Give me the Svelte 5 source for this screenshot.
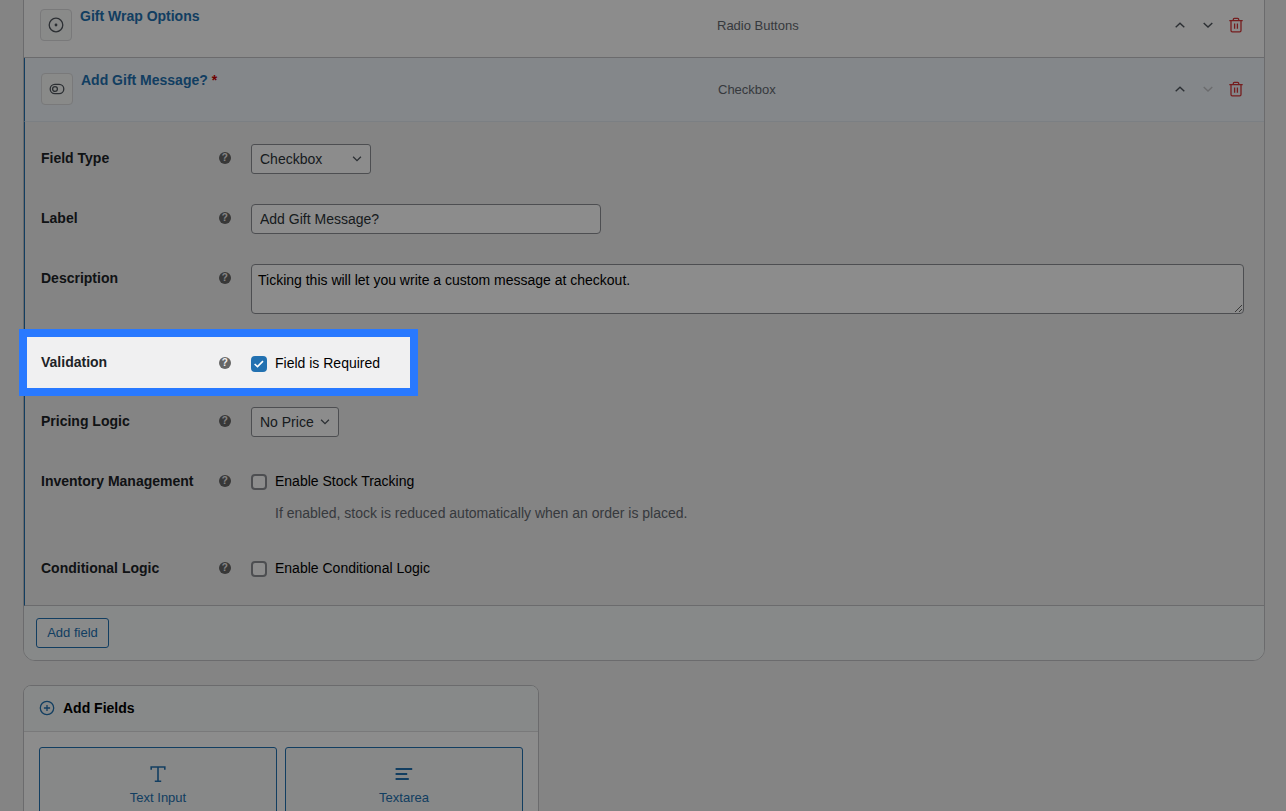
<script>
	let rows = [
		{ id: 'wrap', title: 'Gift Wrap Options', type: 'Radio Buttons', icon: 'radio', required: false, open: false, last: false },
		{ id: 'message', title: 'Add Gift Message?', type: 'Checkbox', icon: 'toggle', required: true, open: true, last: true }
	];

	let fieldLabel = $state('Add Gift Message?');
	let description = $state('Ticking this will let you write a custom message at checkout.');
	let fieldType = $state('Checkbox');
	let pricing = $state('No Price');
	let required = $state(true);
	let stock = $state(false);
	let conditional = $state(false);
</script>

{#snippet chevron(up)}
	<svg width="16" height="16" viewBox="0 0 16 16" fill="none" stroke="currentColor" stroke-width="1.4">
		<path d={up ? 'M3.7 10.3 8 6.2l4.3 4.1' : 'M3.7 5.9 8 10l4.3-4.1'} />
	</svg>
{/snippet}

{#snippet caption(text)}
	<div class="caption">{text}</div>
	<div class="help-cell"><span class="help">?</span></div>
{/snippet}

{#snippet check()}
	<svg class="tick" width="16" height="16" viewBox="0 0 16 16" fill="none" stroke="#fff" stroke-width="1.6">
		<path d="M3.6 8 6.5 10.6l5.5-5.5" />
	</svg>
{/snippet}

{#snippet arrow()}
	<span class="arrow">
		<svg width="10" height="6" viewBox="0 0 10 6" fill="none" stroke="currentColor" stroke-width="1.3"><path d="M1.1.8 5 4.7 8.9.8" /></svg>
	</span>
{/snippet}

<div class="page">
	<div class="panel">
		{#each rows as row (row.id)}
			<div class="field-head" class:open={row.open}>
				<div class="field-name">
					<span class="field-icon">
						{#if row.icon === 'radio'}
							<svg width="16" height="16" viewBox="0 0 16 16">
								<circle cx="8" cy="8" r="6.8" fill="none" stroke="currentColor" stroke-width="1.3" />
								<circle cx="8" cy="8" r="1.4" fill="currentColor" />
							</svg>
						{:else}
							<svg width="16" height="16" viewBox="0 0 16 16" fill="none" stroke="currentColor" stroke-width="1.3">
								<rect x="1.2" y="3.3" width="13.6" height="9.4" rx="4.7" />
								<circle cx="6" cy="8" r="2.4" />
							</svg>
						{/if}
					</span>
					<a href="#{row.id}" class="title">{row.title}{#if row.required}<span class="star">&nbsp;*</span>{/if}</a>
				</div>
				<div class="field-kind">{row.type}</div>
				<div class="actions">
					<button type="button" aria-label="Move up">{@render chevron(true)}</button>
					<button type="button" aria-label="Move down" class:muted={row.last}>{@render chevron(false)}</button>
					<button type="button" aria-label="Delete" class="delete">
						<svg width="16" height="16" viewBox="0 0 16 16" fill="none" stroke="currentColor" stroke-width="1.3">
							<path d="M1.3 3.6h13.4M5.3 3.6V2.4q0-1 1-1h3.4q1 0 1 1v1.2M3 3.6v10q0 1.3 1.3 1.3h7.4q1.3 0 1.3-1.3v-10M6.6 6.6v5.2M9.4 6.6v5.2" />
						</svg>
					</button>
				</div>
			</div>
		{/each}

		<div class="settings">
			<div class="setting">
				{@render caption('Field Type')}
				<div class="control">
					<div class="select type">
						<select bind:value={fieldType}><option>Checkbox</option></select>
						{@render arrow()}
					</div>
				</div>
			</div>
			<div class="setting">
				{@render caption('Label')}
				<div class="control"><input type="text" class="text" bind:value={fieldLabel} /></div>
			</div>
			<div class="setting tall">
				{@render caption('Description')}
				<div class="control"><textarea bind:value={description} spellcheck="false"></textarea></div>
			</div>
			<div class="setting validation">
				{@render caption('Validation')}
				<div class="control">
					<label class="option">
						<span class="box" class:checked={required}><input type="checkbox" bind:checked={required} />{#if required}{@render check()}{/if}</span>
						<span>Field is Required</span>
					</label>
				</div>
			</div>
			<div class="setting">
				{@render caption('Pricing Logic')}
				<div class="control">
					<div class="select price">
						<select bind:value={pricing}><option>No Price</option></select>
						{@render arrow()}
					</div>
				</div>
			</div>
			<div class="setting inventory">
				{@render caption('Inventory Management')}
				<div class="control">
					<label class="option">
						<span class="box" class:checked={stock}><input type="checkbox" bind:checked={stock} />{#if stock}{@render check()}{/if}</span>
						<span>Enable Stock Tracking</span>
					</label>
					<p class="note">If enabled, stock is reduced automatically when an order is placed.</p>
				</div>
			</div>
			<div class="setting">
				{@render caption('Conditional Logic')}
				<div class="control">
					<label class="option">
						<span class="box" class:checked={conditional}><input type="checkbox" bind:checked={conditional} />{#if conditional}{@render check()}{/if}</span>
						<span>Enable Conditional Logic</span>
					</label>
				</div>
			</div>
		</div>

		<div class="panel-foot">
			<button type="button" class="add">Add field</button>
		</div>
	</div>

	<div class="palette">
		<div class="palette-head">
			<svg width="16" height="16" viewBox="0 0 16 16" fill="none" stroke="#2271b1" stroke-width="1.3">
				<circle cx="8" cy="8" r="6.7" />
				<path d="M8 4.9v6.2M4.9 8h6.2" />
			</svg>
			<h2>Add Fields</h2>
		</div>
		<div class="palette-grid">
			<button type="button" class="tile">
				<svg width="18" height="18" viewBox="0 0 18 18" fill="none" stroke="currentColor" stroke-width="1.6">
					<path d="M2.2 4.8V2h13.6v2.8M9 2v14.2M5.8 16.2h6.4" />
				</svg>
				<span>Text Input</span>
			</button>
			<button type="button" class="tile">
				<svg width="18" height="18" viewBox="0 0 18 18" fill="none" stroke="currentColor" stroke-width="2">
					<path d="M.6 4h16.6M.6 9h11.6M.6 14h13.2" />
				</svg>
				<span>Textarea</span>
			</button>
		</div>
	</div>

	<!-- dims everything outside the highlighted row -->
	<div class="spotlight"></div>
</div>

<style>
	:global(body) {
		overflow: hidden;
		background: #f0f0f1;
	}

	.page {
		position: relative;
		height: 811px;
		overflow: hidden;
		box-sizing: border-box;
		padding: 0 21px 0 23px;
		background: #f0f0f1;
		font-family: 'Liberation Sans', Arial, sans-serif;
		font-size: 14px;
		line-height: 20px;
		color: #000;
	}

	.page * {
		box-sizing: border-box;
	}

	button,
	input,
	select,
	textarea {
		font-family: inherit;
		margin: 0;
	}

	svg {
		display: block;
	}

	.panel {
		margin-top: -7px;
		border: 1px solid #c3c4c7;
		border-radius: 0 0 12px 12px;
		overflow: hidden;
		background: #fff;
	}

	.field-head {
		display: flex;
		height: 64px;
		padding: 15px 14px 0 16px;
		border-bottom: 1px solid #c3c4c7;
	}

	.field-head.open {
		background: #f0f6fc;
		border-left: 1px solid #2271b1;
		border-bottom-color: #e0e8ee;
	}

	.field-name {
		display: flex;
		width: 677px;
		gap: 8px;
	}

	.field-icon {
		display: flex;
		width: 32px;
		height: 32px;
		align-items: center;
		justify-content: center;
		border: 1px solid #dcdcde;
		border-radius: 4px;
		background: #f9fbfa;
		color: #50575e;
	}

	.title {
		height: 20px;
		margin-top: -3px;
		font-weight: 700;
		color: #2271b1;
		text-decoration: none;
	}

	.star {
		color: #c00;
	}

	.field-kind {
		flex: 1;
		padding-top: 7px;
		font-size: 13px;
		color: #646970;
	}

	.actions {
		display: flex;
		height: 32px;
		align-items: center;
	}

	.actions button {
		display: flex;
		width: 28px;
		height: 28px;
		align-items: center;
		justify-content: center;
		padding: 0;
		border: none;
		background: none;
		color: #50575e;
	}

	.actions .muted {
		color: #c3c4c7;
	}

	.actions .delete {
		color: #d63638;
	}

	.settings {
		height: 484px;
		padding: 7px 20px 0 16px;
		background: #f0f0f1;
		border-left: 1px solid #2271b1;
		border-bottom: 1px solid #c3c4c7;
	}

	.setting {
		display: flex;
		height: 60px;
	}

	.setting.tall {
		height: 84px;
	}

	.setting.validation {
		height: 59px;
		padding-top: 1px;
	}

	.setting.validation .caption {
		padding-top: 18px;
	}

	.setting.inventory {
		height: 87px;
	}

	.caption {
		width: 177px;
		padding-top: 19px;
		font-weight: 700;
		color: #1d2327;
	}

	.help-cell {
		width: 33px;
		padding-top: 22.6px;
	}

	.help {
		display: block;
		width: 12px;
		height: 12px;
		margin-left: 0.8px;
		border-radius: 50%;
		background: #666;
		color: #f0f0f1;
		font-size: 10px;
		font-weight: 700;
		line-height: 12px;
		text-align: center;
	}

	.control {
		flex: 1;
		padding-top: 15px;
	}

	.select {
		position: relative;
		height: 30px;
	}

	.select.type {
		width: 120px;
	}

	.select.price {
		width: 88px;
	}

	select {
		width: 100%;
		height: 30px;
		padding: 0 24px 0 8px;
		appearance: none;
		border: 1px solid #8c8f94;
		border-radius: 3px;
		background: #fff;
		font-size: 14px;
		color: #2c3338;
	}

	.arrow {
		position: absolute;
		top: 12px;
		right: 9px;
		color: #50575e;
		pointer-events: none;
	}

	.text {
		display: block;
		width: 350px;
		height: 30px;
		padding: 0 8px;
		border: 1px solid #8c8f94;
		border-radius: 4px;
		background: #fff;
		font-size: 14px;
		color: #2c3338;
	}

	textarea {
		display: block;
		width: 993px;
		height: 50px;
		padding: 5px 6px;
		border: 1px solid #8c8f94;
		border-radius: 4px;
		background: #fff;
		font-size: 14px;
		line-height: 20px;
		color: #000;
	}

	.option {
		display: flex;
		gap: 8px;
		height: 20px;
		margin-top: 4px;
	}

	.box {
		position: relative;
		width: 16px;
		height: 16px;
		margin-top: 3px;
		border: 2px solid #8c8f94;
		border-radius: 4px;
		background: #fff;
	}

	.box.checked {
		border-color: #2271b1;
		background: #2271b1;
	}

	.box input {
		display: block;
		width: 100%;
		height: 100%;
		opacity: 0;
	}

	.tick {
		position: absolute;
		top: -2px;
		left: -2px;
	}

	.note {
		margin: 12px 0 0 24px;
		color: #646970;
	}

	.panel-foot {
		height: 54px;
		padding: 12px;
		background: #f6faf9;
	}

	.add {
		width: 73px;
		height: 30px;
		padding: 0 0 2px;
		border: 1px solid #2271b1;
		border-radius: 3px;
		background: #f9fbfb;
		font-size: 13px;
		color: #2271b1;
	}

	.palette {
		width: 516px;
		height: 300px;
		margin-top: 24px;
		border: 1px solid #c3c4c7;
		border-radius: 8px;
		overflow: hidden;
		background: #fff;
	}

	.palette-head {
		display: flex;
		height: 46px;
		align-items: center;
		gap: 8px;
		padding: 0 15px 1px;
		border-bottom: 1px solid #dcdcde;
		background: #f6faf9;
	}

	.palette-head h2 {
		margin: 0;
		font-size: 14px;
		line-height: 20px;
	}

	.palette-grid {
		display: flex;
		gap: 8px;
		padding: 15px;
	}

	.tile {
		display: flex;
		flex: 1;
		height: 76px;
		flex-direction: column;
		align-items: center;
		gap: 6px;
		padding: 17px 0 0;
		border: 1px solid #2271b1;
		border-radius: 3px;
		background: #f6f7f7;
		font-size: 13px;
		line-height: 17px;
		color: #2271b1;
	}

	.spotlight {
		position: absolute;
		top: 329px;
		left: 19px;
		width: 399px;
		height: 67px;
		border: 8px solid #2979ff;
		box-shadow: 0 0 0 1400px rgba(0, 0, 0, 0.45);
		pointer-events: none;
	}
</style>
